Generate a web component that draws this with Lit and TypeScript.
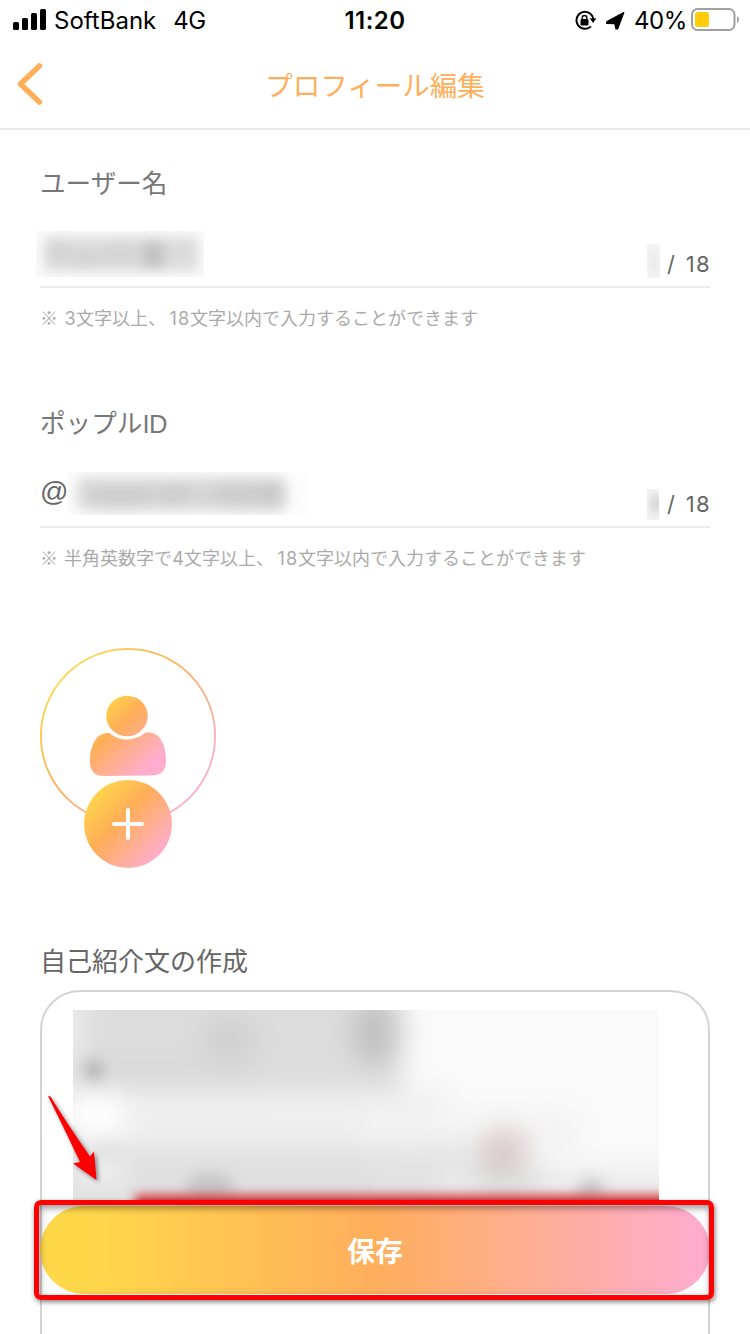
import { LitElement, html, css, svg } from "lit";
import { customElement, property } from "lit/decorators.js";

const JP = css`"Noto Sans CJK JP", sans-serif`;

@customElement("status-bar")
class StatusBar extends LitElement {
  static styles = css`
    :host { display: grid; grid-template-columns: 1fr auto 1fr; align-items: center; height: 40px; padding: 0 11px 0 13px; font: 24px/40px Inter, sans-serif; color: #000; box-sizing: border-box; }
    span, .time { padding-top: 2px; line-height: 38px; }
    .left { display: flex; align-items: center; }
    .bars { margin-right: 7px; }
    .carrier { letter-spacing: 0; margin-right: 17px; }
    .net { letter-spacing: -0.4px; }
    .time { font-weight: 600; letter-spacing: 0.5px; margin-left: -2px; }
    .right { display: flex; align-items: center; justify-content: flex-end; }
    .lock { margin-right: 10px; }
    .nav { margin-right: 9px; }
    .pct { margin-right: 3px; letter-spacing: -0.4px; }
    svg { display: block; flex: none; }
  `;
  render() {
    return html`
      <div class="left">
        <svg class="bars" width="34" height="40" viewBox="13 0 34 40">
          <rect x="13" y="22" width="6" height="8" rx="1.6" /><rect x="22" y="18" width="6" height="12" rx="1.6" />
          <rect x="31" y="13" width="6" height="17" rx="1.6" /><rect x="40" y="9" width="6" height="21" rx="1.6" />
        </svg>
        <span class="carrier">SoftBank</span><span class="net">4G</span>
      </div>
      <div class="time">11:20</div>
      <div class="right">
        <svg class="lock" width="22" height="40" viewBox="574 0 22 40">
          <path d="M592.600 16.500A8.500 8.500 0 1 0 591 26.300M592.600 16.500Q593.200 18 593.200 19.500" fill="none" stroke="#000" stroke-width="1.900" />
          <path d="M589.700 18.300h6.600l-3.300 4.600z" />
          <rect x="580.500" y="19" width="8" height="6.400" rx="1" />
          <path d="M582.200 19.500v-1.600a2.300 2.400 0 0 1 4.600 0v1.600" fill="none" stroke="#000" stroke-width="1.400" />
        </svg>
        <svg class="nav" width="19" height="40" viewBox="607 0 19 40">
          <path d="M624.800 12.500L608 21.500L607.600 23.300L615.800 23.600L617 29L618.600 29Z" stroke="#000" stroke-width="1.200" stroke-linejoin="round" />
        </svg>
        <span class="pct">40%</span>
        <svg width="49" height="40" viewBox="690 0 49 40">
          <rect x="692" y="9" width="42.500" height="21" rx="5.500" fill="none" stroke="#a0a0a0" stroke-width="2" />
          <rect x="695" y="12" width="14" height="15" rx="2.500" fill="#ffcc0a" />
          <path d="M737 16q2 1 2 3.500t-2 3.500z" fill="#a0a0a0" />
        </svg>
      </div>
    `;
  }
}

@customElement("nav-header")
class NavHeader extends LitElement {
  static styles = css`
    :host { display: grid; grid-template-columns: 60px 1fr 60px; align-items: center; height: 90px; border-bottom: 2px solid #ebebeb; box-sizing: border-box; }
    h1 { margin: 0; text-align: center; font: 400 27.5px/40px ${JP}; color: #ffaf5a; padding-bottom: 1px; }
    svg { display: block; margin-left: 16px; }
  `;
  render() {
    return html`
      <svg width="28" height="44" viewBox="16 62 28 44"><path d="M39.300 66L20.500 84l18.800 18" fill="none" stroke="#ffaf5a" stroke-width="5.600" stroke-linecap="round" stroke-linejoin="round" /></svg>
      <h1>プロフィール編集</h1>
    `;
  }
}

type Blob = [number, number, number, number, string, number];

@customElement("redacted-patch")
class RedactedPatch extends LitElement {
  @property({ type: Number }) w = 0;
  @property({ type: Number }) h = 0;
  @property({ type: Number }) blur = 6;
  @property() base = "#fafafa";
  @property({ attribute: false }) blobs: Blob[] = [];
  static styles = css`:host { display: block; } svg { display: block; overflow: hidden; }`;
  render() {
    return html`<svg width=${this.w} height=${this.h} viewBox="0 0 ${this.w} ${this.h}">
      <defs><filter id="b" x="-50%" y="-50%" width="200%" height="200%" color-interpolation-filters="sRGB"><feGaussianBlur stdDeviation=${this.blur} /></filter></defs>
      <rect width=${this.w} height=${this.h} fill=${this.base} />
      <g filter="url(#b)">${this.blobs.map(([x, y, rx, ry, c, o]) => svg`<rect x=${x - rx} y=${y - ry} width=${rx * 2} height=${ry * 2} rx="6" fill=${c} opacity=${o} />`)}</g>
    </svg>`;
  }
}

@customElement("text-field")
class TextField extends LitElement {
  @property() label = "";
  @property() latin = "";
  @property({ type: Number }) max = 18;
  static styles = css`
    :host { display: block; height: 240px; padding-top: 34px; box-sizing: border-box; font-family: ${JP}; }
    .label { font-size: 25.6px; line-height: 36px; height: 37px; color: #777; }
    .latin { font-family: "Liberation Sans", sans-serif; letter-spacing: -0.5px; line-height: 1; }
    .row { display: flex; justify-content: space-between; height: 85px; border-bottom: 2px solid #ececec; }
    .count { display: flex; color: #666; font: 22px/32px Inter, sans-serif; padding-top: 43px; }
    .slash { margin: 4px 5px 0 7px; }
    .num { margin-top: 4px; width: 31px; letter-spacing: 1.4px; margin-right: -1px; text-align: right; white-space: nowrap; }
    .hint { font-size: 18px; line-height: 58px; height: 60px; color: #aaa; white-space: nowrap; }
  `;
  render() {
    return html`
      <div class="label">${this.label}<span class="latin">${this.latin}</span></div>
      <div class="row"><slot></slot>
        <div class="count"><slot name="count"></slot><span class="slash">/</span><span class="num">${this.max}</span></div>
      </div>
      <div class="hint"><slot name="hint"></slot></div>
    `;
  }
}

@customElement("avatar-picker")
class AvatarPicker extends LitElement {
  static styles = css`:host { display: block; } svg { display: block; }`;
  render() {
    return html`<svg width="176" height="220" viewBox="0 0 176 220">
      <defs>
        <linearGradient id="g" x1="0.1" y1="0.2" x2="0.84" y2="0.9"><stop offset="0" stop-color="#ffd34c" /><stop offset=".39" stop-color="#ffae57" /><stop offset="1" stop-color="#ffadcf" /></linearGradient>
        <linearGradient id="p" gradientUnits="userSpaceOnUse" x1="64" y1="56" x2="116" y2="112"><stop offset="0" stop-color="#ffd34c" /><stop offset=".34" stop-color="#ffae57" /><stop offset="1" stop-color="#ffadcf" /></linearGradient>
      </defs>
      <circle cx="88" cy="88" r="87.100" fill="none" stroke="url(#g)" stroke-width="1.800" />
      <ellipse cx="87" cy="68" rx="20.800" ry="20.200" fill="url(#p)" />
      <path d="M69 85Q87 98.500 106 84.600C120 83 126 97 126 112Q127 127.400 111 127.400L64 127.900Q49.500 128 50 113C50 99 56 83.500 69 85Z" fill="url(#p)" />
      <circle cx="88" cy="176" r="44" fill="url(#g)" />
      <path d="M88 162v28M74 176h28" stroke="#fff" stroke-width="4" stroke-linecap="round" />
    </svg>`;
  }
}

const NAME_BLOBS: Blob[] = [
  [85, 23, 77, 17, "#b5b5b5", 0.45], [22, 20, 11, 11, "#999", 0.1], [50, 27, 15, 8, "#999", 0.12],
  [84, 23, 14, 10, "#999", 0.12], [117, 24, 11, 13, "#888", 0.3],
];
const ID_BLOBS: Blob[] = [
  [113, 22, 104, 16, "#a5a5a5", 0.45], [53, 26, 28, 9, "#999", 0.15], [105, 22, 15, 12, "#999", 0.12],
  [168, 21, 20, 14, "#999", 0.15], [204, 22, 14, 15, "#999", 0.18],
];
const COUNT_A: Blob[] = [[7, 18, 6, 12, "#ddd", 0.4]];
const COUNT_B: Blob[] = [[9, 15, 6, 9, "#c4c4c4", 0.7]];
const BIO_BANDS: Blob[] = [
  [165, 22, 165, 58, "#dcdcdc", 1], [95, 64, 90, 16, "#d6d6d6", 0.5], [0, 5, 12, 45, "#ececec", 0.9],
  [185, 112, 190, 32, "#efefef", 1], [395, 125, 110, 24, "#f3f3f3", 1],
  [190, 172, 250, 36, "#dedede", 0.85], [490, 180, 120, 22, "#ebebeb", 1],
  [22, 103, 28, 22, "#fff", 1], [26, 162, 26, 12, "#f5f5f5", 0.8],
];
const BIO_SPOTS: Blob[] = [
  [157, 28, 28, 22, "#c8c8c8", 0.6], [303, 22, 24, 34, "#bdbdbd", 0.85],
  [432, 140, 24, 22, "#d2bcbc", 0.7], [434, 170, 36, 14, "#d0d0d0", 0.6],
];
const BIO_SHARP: Blob[] = [
  [21, 60, 9, 10, "#999", 0.65], [137, 177, 24, 13, "#b5b5b5", 0.65], [518, 180, 14, 12, "#bbb", 0.7],
  [36, 141, 18, 4, "#ccc", 0.5],
];

@customElement("bio-editor")
class BioEditor extends LitElement {
  static styles = css`
    :host { display: block; height: 400px; box-sizing: border-box; border: 2px solid #d4d4d4; border-radius: 40px; padding: 18px 0 0 31px; }
    svg { display: block; overflow: hidden; }
  `;
  private ellipses(list: Blob[]) {
    return list.map(([x, y, rx, ry, c, o]) => svg`<ellipse cx=${x} cy=${y} rx=${rx} ry=${ry} fill=${c} opacity=${o} />`);
  }
  private bands(list: Blob[]) {
    return list.map(([x, y, rx, ry, c, o]) => svg`<rect x=${x - rx} y=${y - ry} width=${rx * 2} height=${ry * 2} fill=${c} opacity=${o} />`);
  }
  render() {
    return html`<svg width="586" height="194" viewBox="0 0 586 194">
      <defs>
        <filter id="soft" filterUnits="userSpaceOnUse" x="-200" y="-200" width="1000" height="600" color-interpolation-filters="sRGB"><feGaussianBlur stdDeviation="13" /></filter>
        <filter id="dot" filterUnits="userSpaceOnUse" x="-200" y="-200" width="1000" height="600" color-interpolation-filters="sRGB"><feGaussianBlur stdDeviation="7" /></filter>
        <filter id="line" filterUnits="userSpaceOnUse" x="-100" y="100" width="900" height="200" color-interpolation-filters="sRGB"><feGaussianBlur stdDeviation="5.500" /></filter>
      </defs>
      <rect width="586" height="194" fill="#fafafa" />
      <g filter="url(#soft)"><rect x="-60" y="-60" width="360" height="300" fill="#e6e6e6" />${this.bands(BIO_BANDS)}${this.ellipses(BIO_SPOTS)}</g>
      <g filter="url(#dot)">${this.ellipses(BIO_SHARP)}</g>
      <rect x="62" y="185" width="620" height="20" fill="#d22f35" filter="url(#line)" />
    </svg>`;
  }
}

@customElement("app-root")
class AppRoot extends LitElement {
  static styles = css`
    :host { display: block; position: relative; width: 750px; height: 1334px; overflow: hidden; background: #fff; font-family: ${JP}; }
    main { padding: 0 40px; }
    .name { margin: 30px 0 0 -4px; }
    .idrow { display: flex; }
    .at { font: 28px/36px "Liberation Sans", sans-serif; color: #666; width: 28px; padding-top: 33px; white-space: nowrap; overflow: hidden; height: 44px; }
    .id { margin-top: 31px; }
    .count-b { margin-top: 5px; margin-right: 1px; }
    .sp { margin-right: 2px; }
    .d { display: inline-block; width: 12px; text-align: center; line-height: 1; font-family: Inter, sans-serif; }
    .dd { display: inline-block; width: 24px; text-align: right; line-height: 1; font-family: Inter, sans-serif; letter-spacing: 1px; }
    avatar-picker { margin-top: 38px; }
    .bio-label { font-size: 26px; line-height: 36px; color: #666; margin: 74px 0 12px; }
    .save { position: absolute; left: 40px; top: 1206px; width: 670px; height: 88px; border: 0; border-radius: 44px; padding: 0 0 1px; font: 700 28px/40px ${JP}; color: #fff; background: linear-gradient(90deg, #ffd84a 7%, #ffae5c 50%, #ffadcb 97%); }
    .frame { position: absolute; left: 34px; top: 1200px; width: 680px; height: 100px; box-sizing: border-box; border: 5px solid #f00; border-radius: 7px; box-shadow: 1px 2px 5px rgba(0,0,0,.5), inset 1px 3px 7px rgba(0,0,0,.42); }
    .arrow { position: absolute; left: 40px; top: 1086px; filter: drop-shadow(2px 2px 2px rgba(0,0,0,.45)); }
  `;
  render() {
    return html`
      <status-bar></status-bar>
      <nav-header></nav-header>
      <main>
        <text-field label="ユーザー名">
          <redacted-patch class="name" .w=${168} .h=${46} .blur=${6} .blobs=${NAME_BLOBS}></redacted-patch>
          <redacted-patch slot="count" .w=${13} .h=${34} .blur=${4} base="#f5f5f5" .blobs=${COUNT_A}></redacted-patch>
          <span slot="hint">※<span class="sp"> </span><span class="d">3</span>文字以上、<span class="dd">18</span>文字以内で入力することができます</span>
        </text-field>
        <text-field label="ポップル" latin="ID">
          <div class="idrow"><span class="at">@</span><redacted-patch class="id" .w=${240} .h=${43} .blur=${7} base="#fdfdfd" .blobs=${ID_BLOBS}></redacted-patch></div>
          <redacted-patch class="count-b" slot="count" .w=${12} .h=${31} .blur=${4} base="#f3f3f3" .blobs=${COUNT_B}></redacted-patch>
          <span slot="hint">※<span class="sp"> </span>半角英数字で<span class="d">4</span>文字以上、<span class="dd">18</span>文字以内で入力することができます</span>
        </text-field>
        <avatar-picker></avatar-picker>
        <div class="bio-label">自己紹介文の作成</div>
        <bio-editor></bio-editor>
      </main>
      <button class="save">保存</button>
      <div class="frame"></div>
      <svg class="arrow" width="70" height="105" viewBox="40 1086 70 105"><path d="M48 1096L50.500 1096.500Q66 1122 90 1156.500L94 1151.500L96.500 1180L73 1163.500L80 1162Q64 1128 48 1096Z" fill="#f00" /></svg>
    `;
  }
}
